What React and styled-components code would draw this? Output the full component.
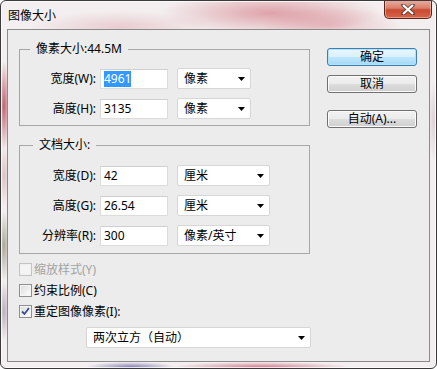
import React from "react";
import styled, { createGlobalStyle } from "styled-components";

const GlobalStyle = createGlobalStyle`
  html, body {
    margin: 0;
    padding: 0;
    background: #ffffff;
  }
  body {
    font-family: "Noto Sans", "Noto Sans CJK SC", sans-serif;
    font-size: 12px;
    color: #000;
  }
`;

const Window = styled.div`
  box-sizing: border-box;
  width: 437px;
  height: 369px;
  border: 1px solid #3a3a3a;
  border-radius: 6px;
  display: flex;
  flex-direction: column;
  overflow: hidden;
  background:
    radial-gradient(ellipse 110px 22px at 270px 12px, rgba(196, 70, 84, 0.45), transparent),
    radial-gradient(ellipse 70px 18px at 330px 24px, rgba(210, 110, 120, 0.35), transparent),
    radial-gradient(ellipse 90px 16px at 120px 26px, rgba(214, 140, 150, 0.35), transparent),
    radial-gradient(ellipse 6px 45px at 3px 105px, rgba(170, 40, 60, 0.7), transparent),
    radial-gradient(ellipse 6px 30px at 3px 175px, rgba(200, 150, 150, 0.5), transparent),
    radial-gradient(ellipse 6px 35px at 3px 245px, rgba(110, 110, 80, 0.55), transparent),
    radial-gradient(ellipse 6px 30px at 3px 310px, rgba(120, 100, 130, 0.45), transparent),
    radial-gradient(ellipse 45px 5px at 130px 366px, rgba(80, 70, 150, 0.65), transparent),
    radial-gradient(ellipse 90px 5px at 260px 366px, rgba(190, 50, 80, 0.6), transparent),
    radial-gradient(ellipse 6px 40px at 433px 120px, rgba(200, 180, 190, 0.5), transparent),
    #f3eeef;
  box-shadow: inset 0 0 0 1px rgba(255, 255, 255, 0.75);
`;

const TitleBar = styled.div`
  height: 28px;
  display: flex;
  justify-content: space-between;
  align-items: flex-start;
  flex-shrink: 0;
`;

const Title = styled.div`
  padding: 7px 0 0 7px;
  line-height: 16px;
  font-size: 12px;
`;

const CloseButton = styled.div`
  box-sizing: border-box;
  width: 48px;
  height: 19px;
  margin: -1px 4px 0 0;
  border: 1px solid #5a2419;
  border-top: none;
  border-radius: 0 0 5px 5px;
  background: linear-gradient(#eab0a2 0%, #d9806c 45%, #c94a30 55%, #d7644a 100%);
  box-shadow: inset 0 0 0 1px rgba(255, 220, 210, 0.45);
  display: flex;
  align-items: center;
  justify-content: center;
`;

const Client = styled.div`
  flex: 1;
  margin: 0 6px 6px 6px;
  border: 1px solid #8a8a8a;
  background: #ececec;
  display: flex;
`;

const MainColumn = styled.div`
  width: 291px;
  padding: 11px 0 0 11px;
  display: flex;
  flex-direction: column;
`;

const Group = styled.fieldset`
  margin: ${(p) => p.$mt || 0}px 0 0 0;
  padding: ${(p) => p.$pt}px 0 ${(p) => p.$pb}px 0;
  min-width: 0;
  border: 1px solid #a6a6a6;
  display: flex;
  flex-direction: column;
  gap: 9px;
`;

const Legend = styled.legend`
  margin-left: ${(p) => p.$ml}px;
  padding: 0 6px;
  line-height: 16px;
`;

const Row = styled.div`
  height: 21px;
  margin-top: ${(p) => p.$mt || 0}px;
  display: flex;
  align-items: center;
`;

const Label = styled.div`
  width: 76px;
  text-align: right;
  line-height: 16px;
  white-space: nowrap;
`;

const TextBox = styled.div`
  box-sizing: border-box;
  width: 68px;
  height: 20px;
  margin-left: 4px;
  padding-left: 3px;
  background: #fff;
  border: 1px solid #dcdcdc;
  border-top-color: #cfcfcf;
  display: flex;
  align-items: center;
  line-height: 16px;
`;

const Selected = styled.span`
  background: #3399ff;
  color: #fff;
`;

const Select = styled.div`
  box-sizing: border-box;
  width: ${(p) => p.$w}px;
  height: 21px;
  margin-left: ${(p) => p.$ml}px;
  padding: 0 5px 0 6px;
  background: #fff;
  border: 1px solid #d6d6d6;
  border-radius: 2px;
  display: flex;
  align-items: center;
  justify-content: space-between;
  line-height: 16px;
  flex-shrink: 0;
`;

const Arrow = () => (
  <svg width="7" height="4" viewBox="0 0 7 4">
    <polygon points="0,0 7,0 3.5,4" fill="#000" />
  </svg>
);

const Checks = styled.div`
  margin-top: 5px;
  display: flex;
  flex-direction: column;
`;

const CheckRow = styled.div`
  height: 21px;
  display: flex;
  align-items: center;
  gap: 2px;
  line-height: 16px;
  color: ${(p) => (p.$disabled ? "#a3a3a3" : "#000")};
`;

const Box = styled.div`
  box-sizing: border-box;
  width: 13px;
  height: 13px;
  border: 1px solid ${(p) => (p.$disabled ? "#c4c4c4" : "#8e8f8f")};
  background: ${(p) =>
    p.$disabled
      ? "#f4f4f4"
      : "linear-gradient(135deg, #dcdcdc 0%, #f4f4f4 70%, #ffffff 100%)"};
  box-shadow: inset 0 0 0 1px ${(p) => (p.$disabled ? "#f0f0f0" : "#f4f4f4")};
  display: flex;
  align-items: center;
  justify-content: center;
`;

const Check = () => (
  <svg width="9" height="9" viewBox="0 0 9 9">
    <path d="M1 4.5 L3.5 7 L8 1" fill="none" stroke="#3b4f8c" strokeWidth="1.8" />
  </svg>
);

const ButtonColumn = styled.div`
  margin-left: 17px;
  padding-top: 18px;
  display: flex;
  flex-direction: column;
`;

const Button = styled.div`
  box-sizing: border-box;
  width: 90px;
  height: 18px;
  margin-top: ${(p) => p.$mt || 0}px;
  border: 1px solid ${(p) => (p.$primary ? "#3c7fb1" : "#707070")};
  border-radius: 3px;
  background: ${(p) =>
    p.$primary
      ? "linear-gradient(#eaf6fd 0%, #d9f0fc 50%, #bee6fd 50%, #a7d9f5 100%)"
      : "linear-gradient(#f2f2f2 0%, #ebebeb 50%, #dddddd 50%, #cfcfcf 100%)"};
  box-shadow: inset 0 0 0 1px ${(p) => (p.$primary ? "#b5e2fb" : "#fcfcfc")};
  display: flex;
  align-items: center;
  justify-content: center;
  line-height: 16px;
`;

export default function App() {
  return (
    <>
      <GlobalStyle />
      <Window>
        <TitleBar>
          <Title>图像大小</Title>
          <CloseButton>
            <svg width="14" height="11" viewBox="0 0 14 11">
              <path
                d="M2 1 L12 10 M12 1 L2 10"
                stroke="#3b3b3b"
                strokeWidth="4"
                strokeLinecap="round"
                opacity="0.7"
              />
              <path d="M2 1 L12 10 M12 1 L2 10" stroke="#fff" strokeWidth="2.2" />
            </svg>
          </CloseButton>
        </TitleBar>
        <Client>
          <MainColumn>
            <Group $pt={11} $pb={6}>
              <Legend $ml={10}>像素大小:44.5M</Legend>
              <Row>
                <Label>宽度(W):</Label>
                <TextBox>
                  <Selected>4961</Selected>
                </TextBox>
                <Select $w={74} $ml={9}>
                  像素
                  <Arrow />
                </Select>
              </Row>
              <Row>
                <Label>高度(H):</Label>
                <TextBox>3135</TextBox>
                <Select $w={74} $ml={9}>
                  像素
                  <Arrow />
                </Select>
              </Row>
            </Group>
            <Group $mt={11} $pt={12} $pb={7}>
              <Legend $ml={13}>文档大小:</Legend>
              <Row>
                <Label>宽度(D):</Label>
                <TextBox>42</TextBox>
                <Select $w={93} $ml={9}>
                  厘米
                  <Arrow />
                </Select>
              </Row>
              <Row>
                <Label>高度(G):</Label>
                <TextBox>26.54</TextBox>
                <Select $w={93} $ml={9}>
                  厘米
                  <Arrow />
                </Select>
              </Row>
              <Row>
                <Label>分辨率(R):</Label>
                <TextBox>300</TextBox>
                <Select $w={93} $ml={9}>
                  像素/英寸
                  <Arrow />
                </Select>
              </Row>
            </Group>
            <Checks>
              <CheckRow $disabled>
                <Box $disabled />
                缩放样式(Y)
              </CheckRow>
              <CheckRow>
                <Box />
                约束比例(C)
              </CheckRow>
              <CheckRow>
                <Box>
                  <Check />
                </Box>
                重定图像像素(I):
              </CheckRow>
            </Checks>
            <Row $mt={5}>
              <Select $w={225} $ml={67}>
                两次立方（自动）
                <Arrow />
              </Select>
            </Row>
          </MainColumn>
          <ButtonColumn>
            <Button $primary>确定</Button>
            <Button $mt={9}>取消</Button>
            <Button $mt={17}>自动(A)...</Button>
          </ButtonColumn>
        </Client>
      </Window>
    </>
  );
}
